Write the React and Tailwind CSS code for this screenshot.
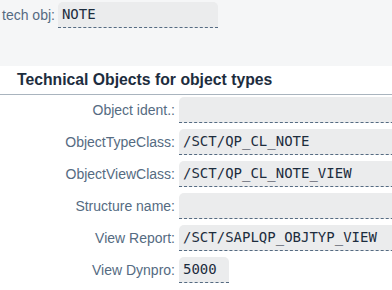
import React from "react";

const rows = [
  { label: "Object ident.:", value: "" },
  { label: "ObjectTypeClass:", value: "/SCT/QP_CL_NOTE" },
  { label: "ObjectViewClass:", value: "/SCT/QP_CL_NOTE_VIEW" },
  { label: "Structure name:", value: "" },
  { label: "View Report:", value: "/SCT/SAPLQP_OBJTYP_VIEW" },
  { label: "View Dynpro:", value: "5000", short: true },
];

function Field({ value, className }) {
  return (
    <div
      className={`h-[26px] bg-[#ebeced] rounded-t-[5px] border-b border-dashed border-[#556b82] pl-[4px] flex items-center text-[14px] text-[#1d2d3e] font-['DejaVu_Sans_Mono',monospace] whitespace-nowrap ${className}`}
    >
      {value}
    </div>
  );
}

export default function App() {
  return (
    <div className="w-[392px] h-[290px] overflow-hidden bg-white font-['Liberation_Sans',Arial,sans-serif]">
      {/* cabecera */}
      <div className="h-[66px] bg-[#f5f6f7] pt-[2px] pl-[2px]">
        <div className="flex items-center gap-[3px]">
          <span className="text-[14px] text-[#556b82]">tech obj:</span>
          <Field value="NOTE" className="w-[160px]" />
        </div>
      </div>

      {/* titulo */}
      <div className="h-[29px] border-b border-[#a9b4be] pl-[17px] flex items-center">
        <h2 className="text-[15.75px] font-bold text-[#1d2d3e]">Technical Objects for object types</h2>
      </div>

      {/* campos */}
      <div className="pt-[2px] flex flex-col gap-[6px]">
        {rows.map((r) => (
          <div key={r.label} className="flex items-center">
            <span className="w-[176px] shrink-0 text-right pr-[1px] text-[14px] text-[#556b82]">{r.label}</span>
            <Field value={r.value} className={r.short ? "ml-[3px] w-[50px]" : "ml-[3px] w-[240px] shrink-0"} />
          </div>
        ))}
      </div>
    </div>
  );
}
